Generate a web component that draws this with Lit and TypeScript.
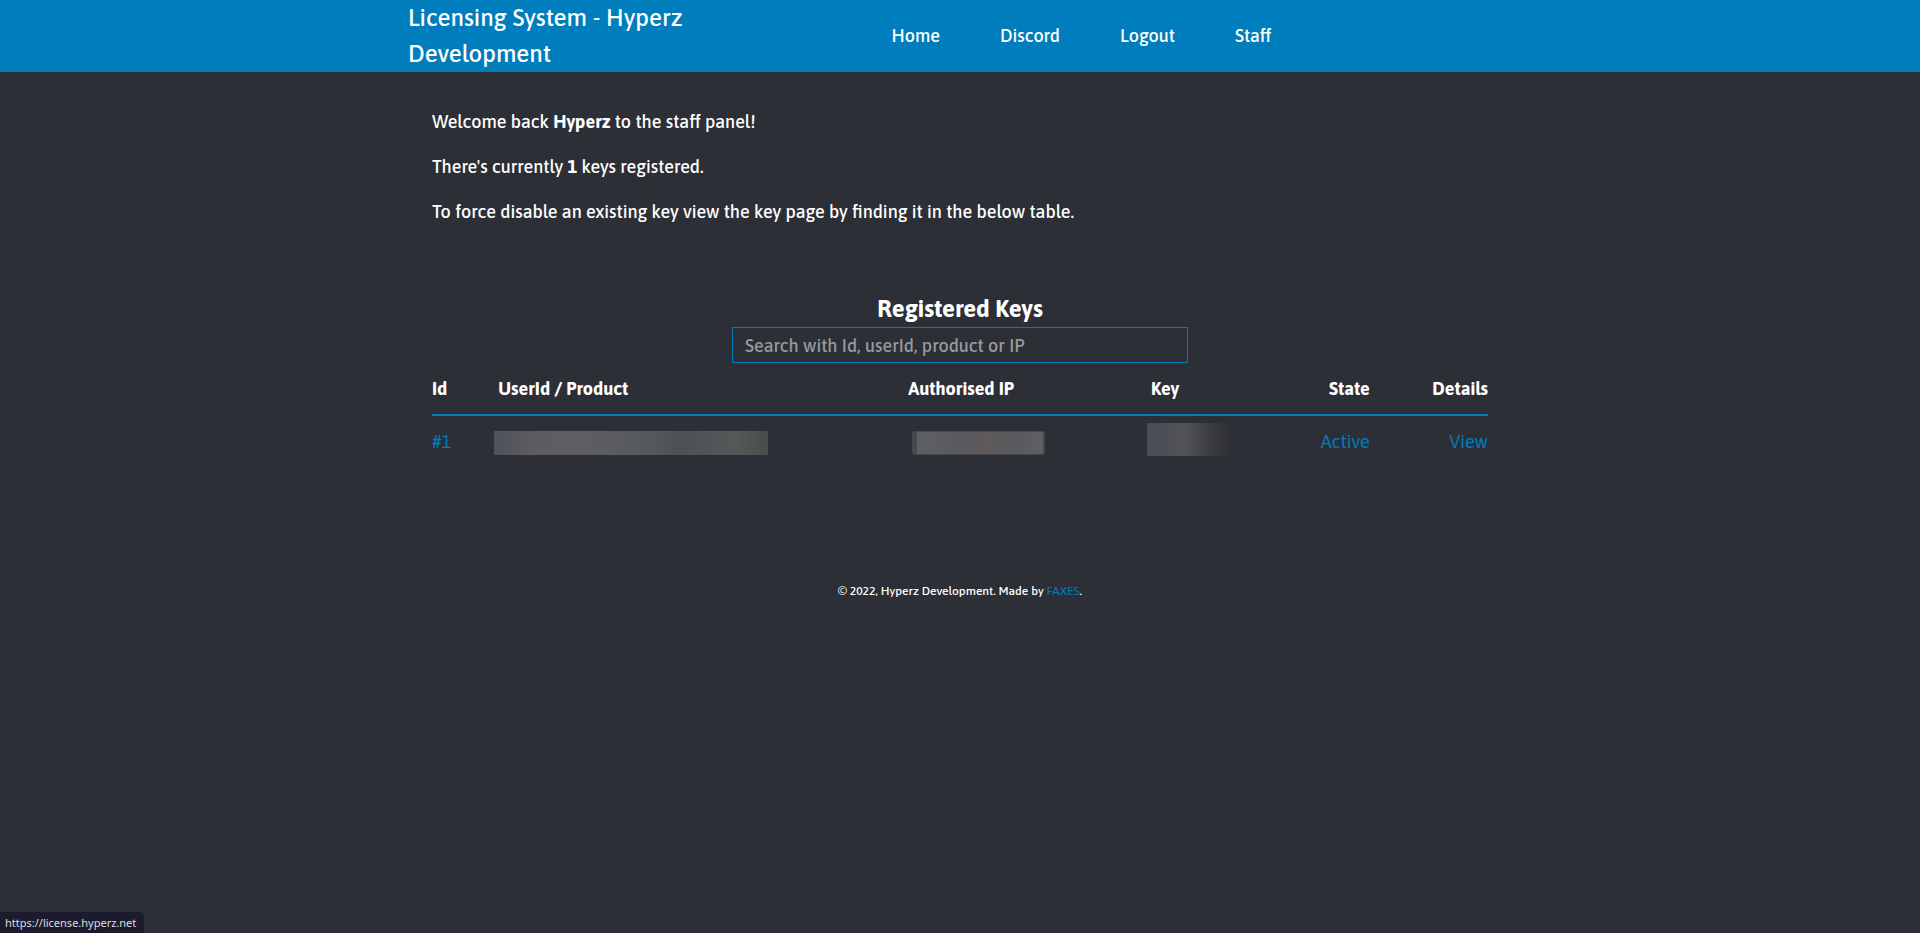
import { LitElement, html, css } from "lit";
import { customElement } from "lit/decorators.js";

interface NavItem {
  label: string;
  href: string;
}

@customElement("app-root")
export class AppRoot extends LitElement {
  static styles = css`
    :host {
      --accent: #007dbc;
      display: flex;
      flex-direction: column;
      min-height: 100vh;
      box-sizing: border-box;
      background: #2d2f37;
      color: #fff;
      font: 500 18px/27px Asap, Lato, sans-serif;
    }
    a {
      color: var(--accent);
      text-decoration: none;
      font-weight: 400;
    }
    .bar {
      background: var(--accent);
    }
    .bar-inner {
      display: grid;
      grid-template-columns: 27.5% 1fr;
      align-items: center;
      column-gap: 16.3%;
      width: 57.5%;
      min-height: 72px;
      margin: 0 auto;
    }
    .brand {
      margin: 0;
      font-size: 24px;
      line-height: 36px;
      font-weight: 500;
    }
    .nav {
      display: flex;
      gap: 60px;
      padding-bottom: 1px;
    }
    .nav a {
      color: #fff;
      font-weight: 500;
    }
    .content {
      width: 55%;
      margin: 0 auto;
      padding-top: 36px;
    }
    .intro p {
      margin: 0 0 18px;
    }
    .keys {
      display: flex;
      flex-direction: column;
      align-items: center;
      margin-top: 66px;
    }
    .keys h2 {
      margin: 0;
      font-size: 24px;
      line-height: 36px;
      font-weight: 700;
    }
    .search {
      box-sizing: border-box;
      width: 456px;
      max-width: 100%;
      height: 36px;
      padding: 0 12px;
      border: 1px solid var(--accent);
      border-radius: 0;
      outline: none;
      background: transparent;
      color: #fff;
      font: inherit;
    }
    .search::placeholder {
      color: #98999d;
      opacity: 1;
    }
    table {
      width: 100%;
      table-layout: fixed;
      border-collapse: collapse;
    }
    th {
      padding: 12px 0;
      border-bottom: 2px solid var(--accent);
      text-align: left;
      font-weight: 700;
    }
    td {
      height: 50px;
      padding: 0;
    }
    .c-id { width: 5.9%; }
    .c-user { width: 39.2%; }
    .c-ip { width: 22.6%; }
    .c-key { width: 11.4%; }
    .c-state { width: 9.7%; }
    .inset { padding-left: 4px; }
    .end { text-align: right; }
    .mask {
      display: block;
      height: 24px;
      margin-top: 4px;
    }
    .mask-user {
      width: 274px;
      background: linear-gradient(90deg, #50525a, #5b5b60 12%, #5e5e63 30%, #585b5e 52%, #4d5055 68%, #505456 76%, #545859 88%, #484c4c);
    }
    .mask-ip {
      box-sizing: border-box;
      width: 133px;
      margin-left: 4px;
      border: 1px solid #48494d;
      border-left-width: 5px;
      border-right-width: 2px;
      border-radius: 3px;
      background: linear-gradient(90deg, #5d6064, #5a5a5e 35%, #5e5a5d 55%, #58595d 75%, #5f6064);
    }
    .mask-key {
      width: 84px;
      height: 33px;
      margin: 0 0 4px;
      background: linear-gradient(90deg, #484c57, #505156 30%, #525256 45%, #46474b 62%, #393a3d 78%, #2f3034);
    }
    .footer {
      margin: 0 auto;
      padding: 112px 16px 24px;
      font-size: 12px;
      line-height: 27px;
    }
    .status {
      position: fixed;
      left: 0;
      bottom: 0;
      padding: 0 8px 0 5px;
      border-top-right-radius: 4px;
      background: #1c1b2e;
      color: #dcdce0;
      font: 11px/21px "Noto Sans", sans-serif;
    }
  `;

  private nav: NavItem[] = [
    { label: "Home", href: "#home" },
    { label: "Discord", href: "#discord" },
    { label: "Logout", href: "#logout" },
    { label: "Staff", href: "#staff" },
  ];

  render() {
    return html`
      <header class="bar">
        <div class="bar-inner">
          <h1 class="brand">Licensing System - Hyperz Development</h1>
          <nav class="nav">
            ${this.nav.map((n) => html`<a href=${n.href}>${n.label}</a>`)}
          </nav>
        </div>
      </header>
      <main class="content">
        <section class="intro">
          <p>Welcome back <b>Hyperz</b> to the staff panel!</p>
          <p>There's currently <b>1</b> keys registered.</p>
          <p>To force disable an existing key view the key page by finding it in the below table.</p>
        </section>
        <section class="keys">
          <h2 id="keys-title">Registered Keys</h2>
          <input class="search" type="text" aria-labelledby="keys-title" placeholder="Search with Id, userId, product or IP" />
          <table>
            <colgroup>
              <col class="c-id" />
              <col class="c-user" />
              <col class="c-ip" />
              <col class="c-key" />
              <col class="c-state" />
              <col />
            </colgroup>
            <thead>
              <tr>
                <th>Id</th>
                <th class="inset">UserId / Product</th>
                <th>Authorised IP</th>
                <th class="inset">Key</th>
                <th class="end">State</th>
                <th class="end">Details</th>
              </tr>
            </thead>
            <tbody>
              <tr>
                <td><a href="#key-1">#1</a></td>
                <td><span class="mask mask-user"></span></td>
                <td><span class="mask mask-ip"></span></td>
                <td><span class="mask mask-key"></span></td>
                <td class="end"><a href="#active">Active</a></td>
                <td class="end"><a href="#view">View</a></td>
              </tr>
            </tbody>
          </table>
        </section>
      </main>
      <footer class="footer">© 2022, Hyperz Development. Made by <a href="#faxes">FAXES</a>.</footer>
      <div class="status">https://license.hyperz.net</div>
    `;
  }
}
